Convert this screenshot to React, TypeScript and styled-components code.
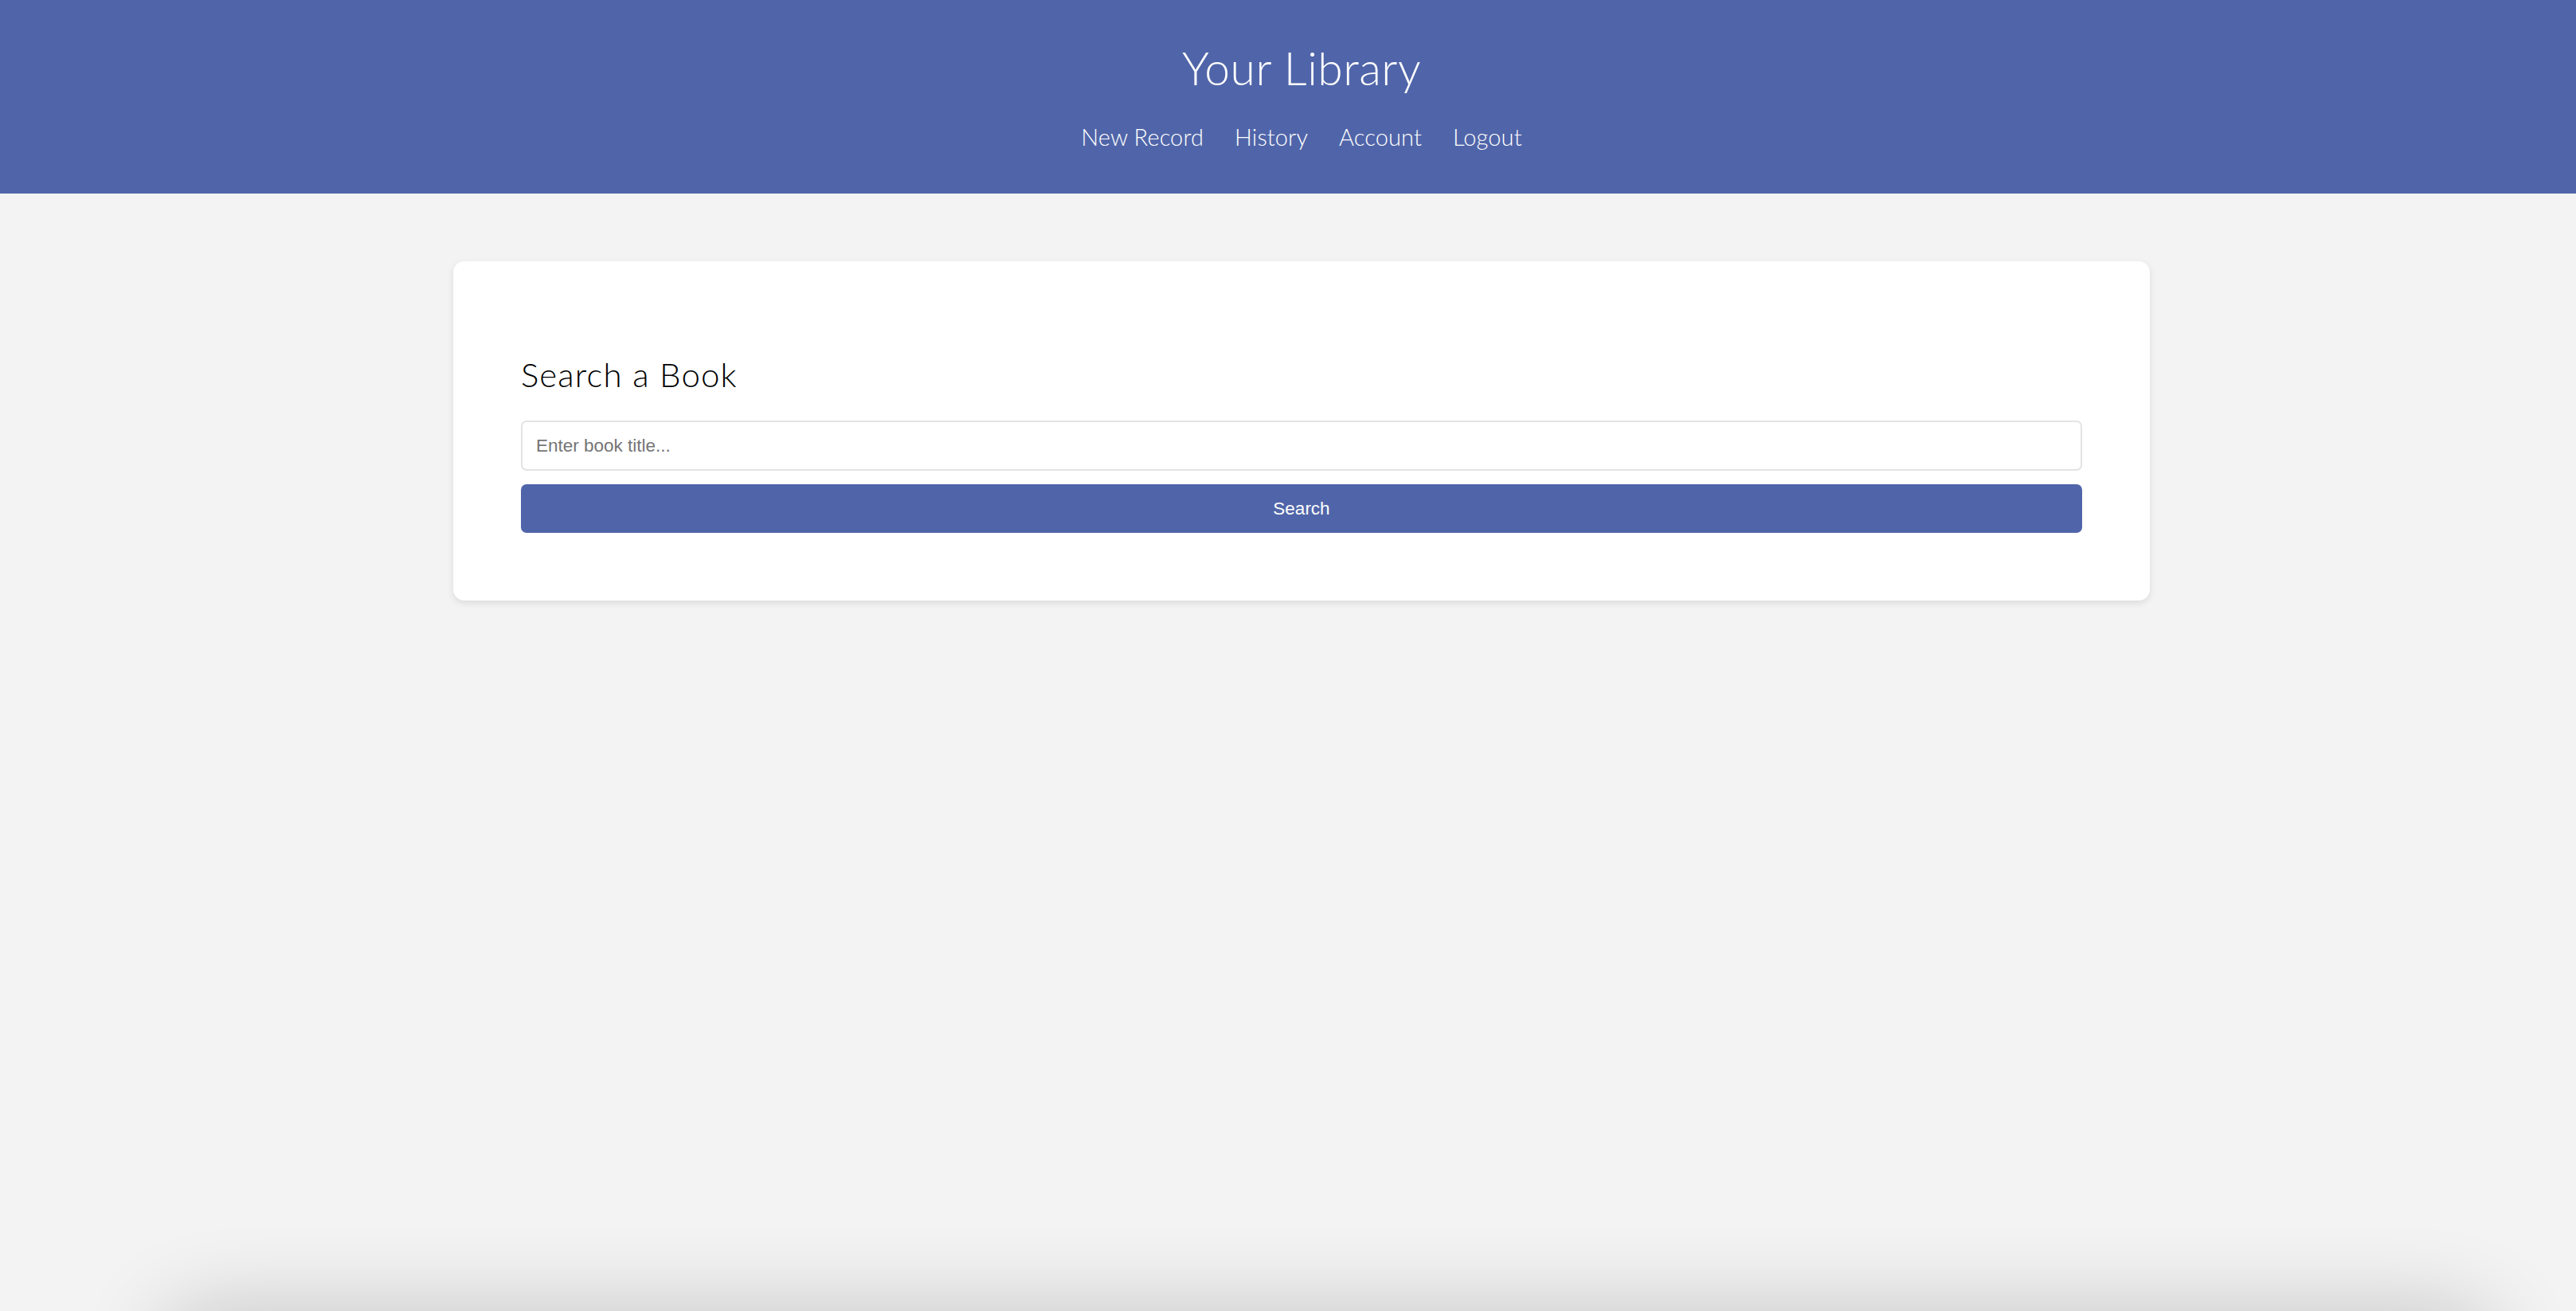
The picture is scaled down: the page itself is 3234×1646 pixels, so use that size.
import React from "react";
import styled, { createGlobalStyle } from "styled-components";

const GlobalStyle = createGlobalStyle`
  * { box-sizing: border-box; }
  html, body { margin: 0; padding: 0; }
  body {
    background: #f3f3f3;
    font-family: "Lato", "Open Sans", sans-serif;
    min-height: 100vh;
    overflow: hidden;
  }
`;

const Page = styled.div`
  min-height: 100vh;
  display: flex;
  flex-direction: column;
`;

const Header = styled.header`
  background: #5065a9;
  color: #fff;
  padding: 57px 0 57px 34px;
  display: flex;
  flex-direction: column;
  align-items: center;
`;

const Title = styled.h1`
  margin: 0;
  font-family: "Lato", sans-serif;
  font-weight: 300;
  font-size: 57px;
  line-height: 57px;
  letter-spacing: 0.5px;
`;

const Nav = styled.nav`
  margin-top: 43px;
  display: flex;
  gap: 39px;
`;

const NavLink = styled.a`
  color: #fff;
  text-decoration: none;
  font-family: "Lato", sans-serif;
  font-weight: 300;
  font-size: 29px;
  line-height: 29px;
  letter-spacing: 0.1px;
  cursor: pointer;
`;

const Main = styled.main`
  padding: 85px 0 0 34px;
  display: flex;
  justify-content: center;
`;

const Card = styled.section`
  width: 2130px;
  background: #fff;
  border-radius: 14px;
  box-shadow: 0 3px 8px rgba(0, 0, 0, 0.1);
  padding: 85px;
  display: flex;
  flex-direction: column;
`;

const Heading = styled.h2`
  margin: 36px 0 37px;
  font-family: "Lato", sans-serif;
  font-weight: 300;
  font-size: 42px;
  line-height: 42px;
  letter-spacing: 1.1px;
  color: #000;
`;

const Form = styled.form`
  display: flex;
  flex-direction: column;
  gap: 17px;
`;

const Input = styled.input`
  height: 63px;
  border: 2px solid #e3e3e3;
  border-radius: 7px;
  padding: 0 17px;
  font-family: "Liberation Sans", Arial, sans-serif;
  font-size: 22.5px;
  color: #222;
  outline: none;
  &::placeholder { color: #757575; }
`;

const Button = styled.button`
  height: 61px;
  border: none;
  border-radius: 7px;
  background: #5065a9;
  color: #fff;
  font-family: "Liberation Sans", Arial, sans-serif;
  font-size: 22.5px;
  cursor: pointer;
`;

const BottomGlow = styled.div`
  position: fixed;
  left: 200px;
  right: 100px;
  bottom: -120px;
  height: 120px;
  border-radius: 60px;
  background: #f3f3f3;
  box-shadow: 0 0 110px rgba(0, 0, 0, 0.2);
  pointer-events: none;
`;

export default function App() {
  const links = ["New Record", "History", "Account", "Logout"];
  return (
    <>
      <GlobalStyle />
      <Page>
        <Header>
          <Title>Your Library</Title>
          <Nav>
            {links.map((l) => (
              <NavLink key={l}>{l}</NavLink>
            ))}
          </Nav>
        </Header>
        <Main>
          <Card>
            <Heading>Search a Book</Heading>
            <Form onSubmit={(e) => e.preventDefault()}>
              <Input type="text" placeholder="Enter book title..." />
              <Button type="submit">Search</Button>
            </Form>
          </Card>
        </Main>
      </Page>
      <BottomGlow />
    </>
  );
}
